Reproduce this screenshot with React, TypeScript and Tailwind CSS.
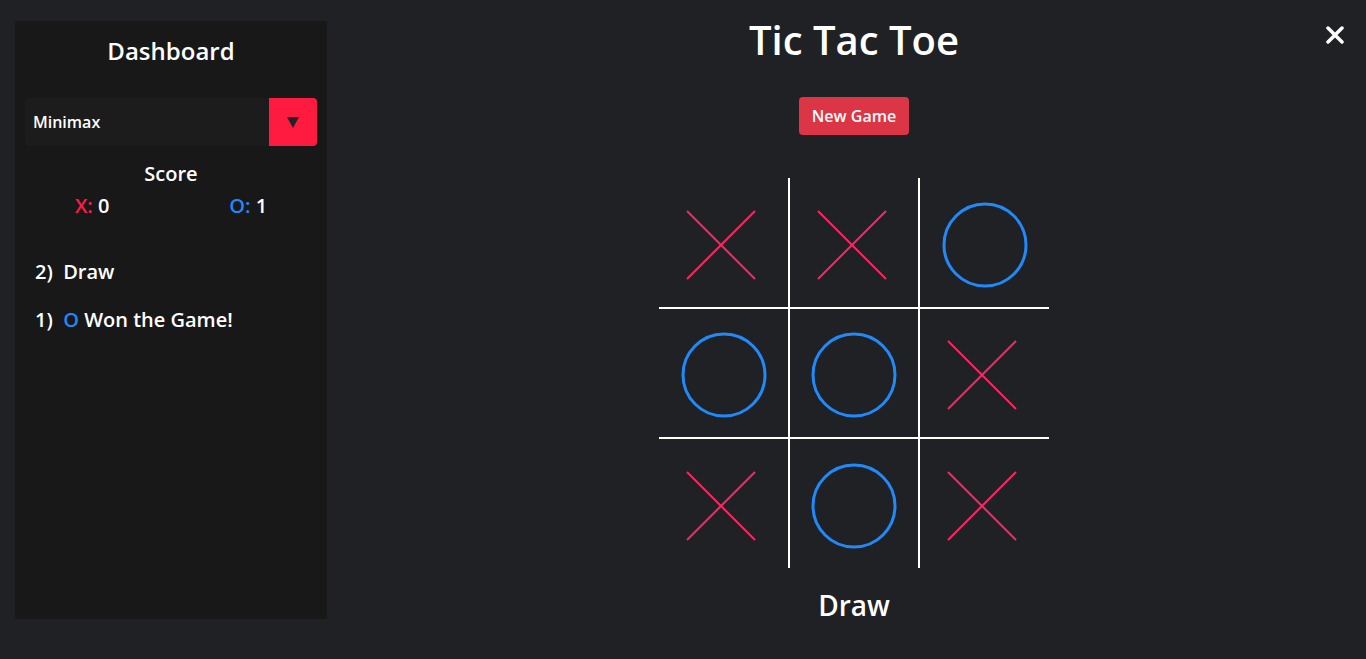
import React from "react";

type Cell = "X" | "O" | null;

const board: Cell[] = ["X", "X", "O", "O", "O", "X", "X", "O", "X"];

const history = [
    { n: 2, text: "Draw", winner: null as Cell },
    { n: 1, text: "Won the Game!", winner: "O" as Cell },
];

const XMark = () => (
    <svg width="70" height="70" viewBox="0 0 70 70" className="mr-[5px]">
        <line x1="1" y1="1" x2="69" y2="69" stroke="#ff2462" strokeWidth="2" />
        <line x1="69" y1="1" x2="1" y2="69" stroke="#ff2462" strokeWidth="2" />
    </svg>
);

const OMark = () => (
    <svg width="88" height="88" viewBox="0 0 88 88">
        <circle cx="44" cy="44" r="41" fill="none" stroke="#2189f8" strokeWidth="3" />
    </svg>
);

const Sidebar: React.FC = () => {
    return (
        <aside className="ml-[15px] mt-[21px] flex h-[598px] w-[312px] shrink-0 flex-col bg-[#181818] text-white">
            <h2 className="mt-[14px] text-center text-[24px] leading-[32px] font-semibold">Dashboard</h2>

            {/* algorithm select */}
            <div className="mx-[10px] mt-[31px] flex h-[48px] items-center rounded bg-[#1c1c1c]">
                <span className="flex-1 pl-[8px] text-[16px] font-semibold">Minimax</span>
                <div className="flex h-[48px] w-[48px] items-center justify-center rounded-r bg-[#ff1a40]">
                    <svg width="12" height="11" viewBox="0 0 12 11">
                        <polygon points="0,0 12,0 6,11" fill="#222228" />
                    </svg>
                </div>
            </div>

            <div className="mt-[14px] text-center text-[20px] leading-[28px] font-semibold">Score</div>
            <div className="mt-[4px] flex justify-around text-[20px] leading-[28px] font-semibold">
                <span>
                    <span className="text-[#ff1a4a]">X:</span> 0
                </span>
                <span>
                    <span className="text-[#2189f8]">O:</span> 1
                </span>
            </div>

            <ul className="mt-[38px] flex flex-col gap-[20px] pl-[20px] text-[20px] leading-[28px] font-semibold">
                {history.map((h) => (
                    <li key={h.n}>
                        {h.n})&nbsp;&nbsp;
                        {h.winner && <span className="text-[#2189f8]">{h.winner} </span>}
                        {h.text}
                    </li>
                ))}
            </ul>
        </aside>
    );
};

const Board: React.FC = () => {
    return (
        <div className="grid grid-cols-[131px_130px_129px] grid-rows-[131px_130px_129px]">
            {board.map((c, i) => {
                const col = i % 3;
                const row = Math.floor(i / 3);
                return (
                    <div
                        key={i}
                        className={
                            "flex items-center justify-center border-white pt-[4px] " +
                            (col < 2 ? "border-r-2 " : "") +
                            (row < 2 ? "border-b-2 " : "")
                        }
                    >
                        {c === "X" ? <XMark /> : c === "O" ? <OMark /> : null}
                    </div>
                );
            })}
        </div>
    );
};

export default function App() {
    return (
        <div
            className="relative flex min-h-screen bg-[#202125] text-white"
            style={{ fontFamily: '"Open Sans", "Noto Sans", sans-serif' }}
        >
            <Sidebar />

            <main className="flex flex-1 flex-col items-center pl-[15px]">
                <h1 className="mt-[16px] text-[40px] leading-[48px] font-semibold">Tic Tac Toe</h1>
                <button className="mt-[33px] h-[38px] rounded bg-[#dc3545] px-[13px] text-[16px] font-semibold text-white">
                    New Game
                </button>
                <div className="mt-[43px]">
                    <Board />
                </div>
                <div className="mt-[19px] text-[28px] leading-[36px] font-semibold">Draw</div>
            </main>

            <button className="absolute right-[22px] top-[26px]" aria-label="close">
                <svg width="18" height="18" viewBox="0 0 18 18">
                    <path d="M2 2 L16 16 M16 2 L2 16" stroke="#fff" strokeWidth="3.5" strokeLinecap="round" />
                </svg>
            </button>
        </div>
    );
}
